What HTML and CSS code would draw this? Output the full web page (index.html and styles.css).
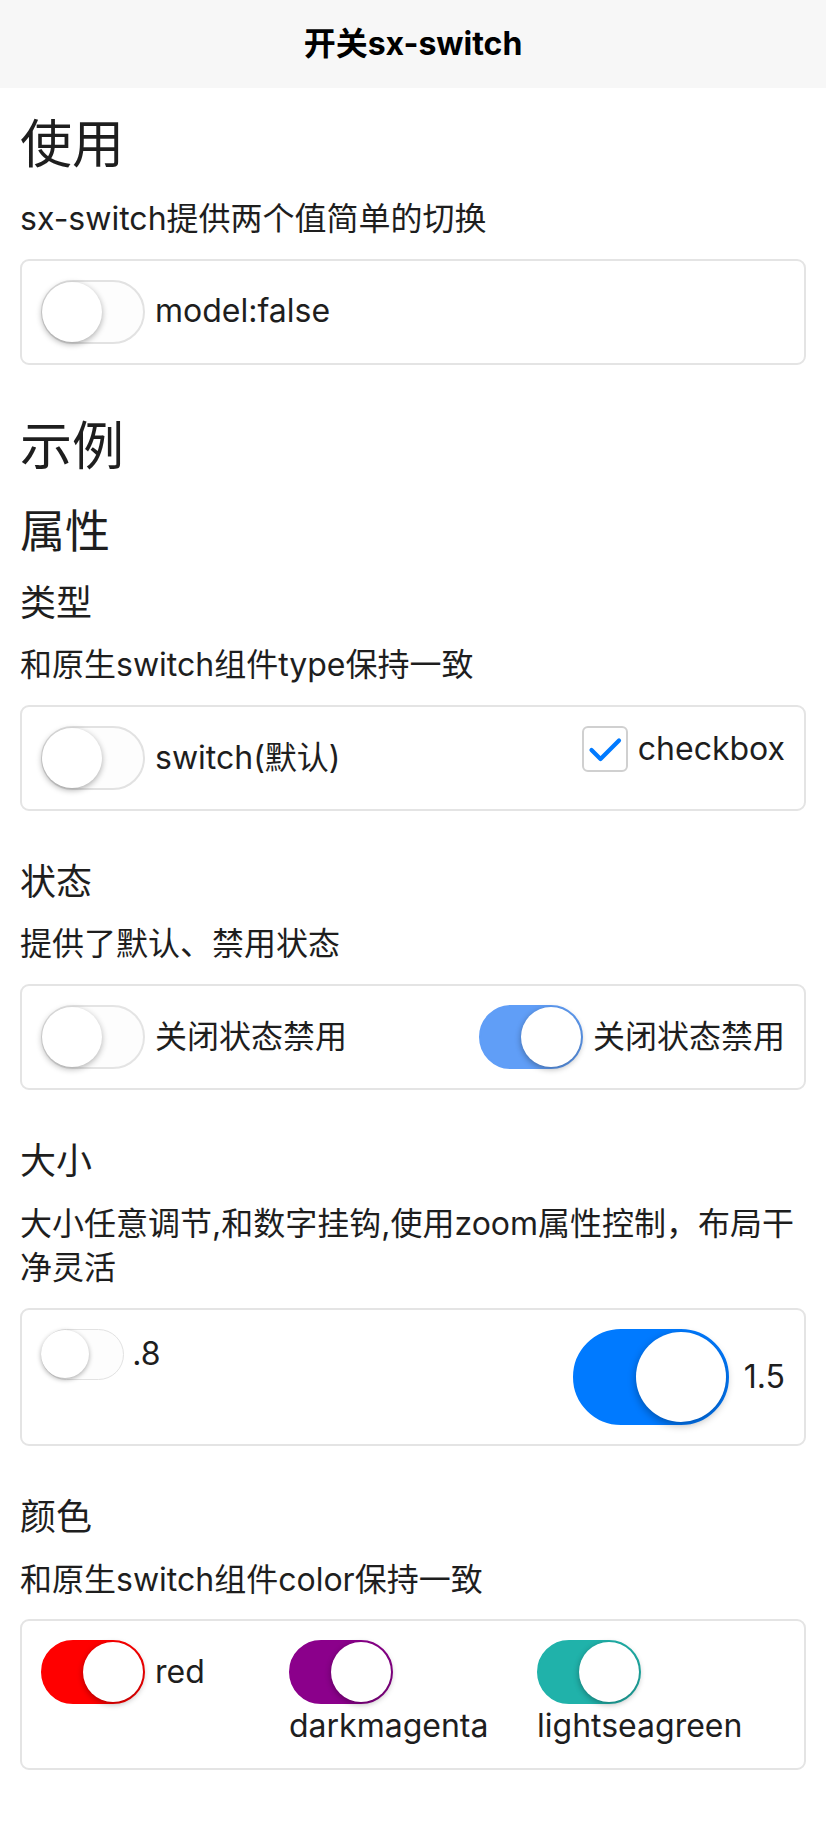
FILE: index.html
```html
<!DOCTYPE html>
<html lang="zh-CN">
<head>
<meta charset="utf-8">
<title>开关sx-switch</title>
<link rel="stylesheet" href="styles.css">
</head>
<body>
<header class="navbar"><span class="navbar-title">开关sx-switch</span></header>
<main class="page">
  <h1 class="title">使用</h1>
  <p class="desc">sx-switch提供两个值简单的切换</p>
  <div class="card">
    <div class="row">
      <label class="item"><span class="switch"></span><span class="label">model:false</span></label>
    </div>
  </div>

  <h1 class="title title-major">示例</h1>
  <h2 class="subtitle">属性</h2>

  <h3 class="section">类型</h3>
  <p class="desc">和原生switch组件type保持一致</p>
  <div class="card">
    <div class="row">
      <label class="item"><span class="switch"></span><span class="label">switch(默认)</span></label>
      <label class="item">
        <span class="checkbox"><svg class="check" viewBox="0 0 42 42" width="42" height="42"><path d="M7.5 22 L16.5 31 L35 12.5" fill="none" stroke="#007aff" stroke-width="4.2" stroke-linecap="round" stroke-linejoin="round"/></svg></span>
        <span class="label">checkbox</span>
      </label>
    </div>
  </div>

  <h3 class="section">状态</h3>
  <p class="desc">提供了默认、禁用状态</p>
  <div class="card">
    <div class="row">
      <label class="item"><span class="switch is-disabled"></span><span class="label">关闭状态禁用</span></label>
      <label class="item"><span class="switch is-on is-disabled"></span><span class="label">关闭状态禁用</span></label>
    </div>
  </div>

  <h3 class="section">大小</h3>
  <p class="desc">大小任意调节,和数字挂钩,使用zoom属性控制，布局干净灵活</p>
  <div class="card">
    <div class="row">
      <label class="item"><span class="switch size-08"></span><span class="label">.8</span></label>
      <label class="item"><span class="switch is-on size-15"></span><span class="label">1.5</span></label>
    </div>
  </div>

  <h3 class="section">颜色</h3>
  <p class="desc">和原生switch组件color保持一致</p>
  <div class="card">
    <div class="grid3">
      <label class="item"><span class="switch is-on c-red"></span><span class="label">red</span></label>
      <label class="item"><span class="switch is-on c-darkmagenta"></span><span class="label">darkmagenta</span></label>
      <label class="item"><span class="switch is-on c-lightseagreen"></span><span class="label">lightseagreen</span></label>
    </div>
  </div>
</main>
</body>
</html>
```

FILE: styles.css
```css
* {
  box-sizing: border-box;
}

html, body {
  margin: 0;
  padding: 0;
  background: #ffffff;
}

body {
  font-family: Inter, "Noto Sans CJK SC", sans-serif;
  font-size: 32px;
  line-height: 1.4;
  color: #1e1e1e;
}

.navbar {
  height: 88px;
  background: #f7f7f7;
  display: flex;
  align-items: center;
  justify-content: center;
}

.navbar-title {
  font-size: 32px;
  font-weight: 700;
  color: #000000;
  line-height: 1;
}

.page {
  padding: 0 20px 40px;
}

.title {
  margin: 22px 0 0;
  font-size: 52px;
  line-height: 70px;
  font-weight: 400;
}

.title-major {
  margin-top: 47px;
}

.subtitle {
  margin: 18px 0 0;
  font-size: 45px;
  line-height: 63px;
  font-weight: 400;
}

.section {
  margin: 46px 0 0;
  font-size: 36px;
  line-height: 50.4px;
  font-weight: 400;
}

.subtitle + .section {
  margin-top: 15px;
}

.desc {
  margin: 15px 0 0;
}

.title + .desc {
  margin-top: 17px;
}

.card {
  margin-top: 17px;
  border: 2px solid #e4e4e4;
  border-radius: 9px;
  padding: 19px;
}

.row {
  display: flex;
  justify-content: space-between;
  align-items: flex-start;
}

.grid3 {
  display: grid;
  grid-template-columns: repeat(3, 1fr);
  align-items: start;
}

.item {
  display: flex;
  flex-wrap: wrap;
  align-items: center;
}

.label {
  line-height: 44.8px;
}

.checkbox + .label {
  margin-left: 10px;
}

/* switch */
.switch {
  --c: #007aff;
  position: relative;
  flex: none;
  display: block;
  width: 104px;
  height: 64px;
  margin-right: 10px;
  border: 2px solid #e2e2e2;
  border-radius: 32px;
  background: #fdfdfd;
}

.switch::after {
  content: "";
  position: absolute;
  top: 0;
  left: -1px;
  width: 60px;
  height: 60px;
  border-radius: 50%;
  background: #ffffff;
  box-shadow: 0 2px 6px rgba(0, 0, 0, 0.33);
}

.switch.is-on {
  background: var(--c);
  border-color: var(--c);
}

.switch.is-on::after {
  left: 40px;
}

.switch.is-disabled {
  opacity: 0.9;
}

.switch.is-on.is-disabled {
  --c: #609ef7;
  opacity: 1;
}

.size-08 {
  zoom: 0.8;
}

.size-15 {
  zoom: 1.5;
}

.c-red {
  --c: #ff0000;
}

.c-darkmagenta {
  --c: #8b008b;
}

.c-lightseagreen {
  --c: #20b2aa;
}

/* checkbox */
.checkbox {
  flex: none;
  width: 46px;
  height: 46px;
  border: 2px solid #d0d0d0;
  border-radius: 6px;
  background: #ffffff;
}

.check {
  display: block;
}
```
